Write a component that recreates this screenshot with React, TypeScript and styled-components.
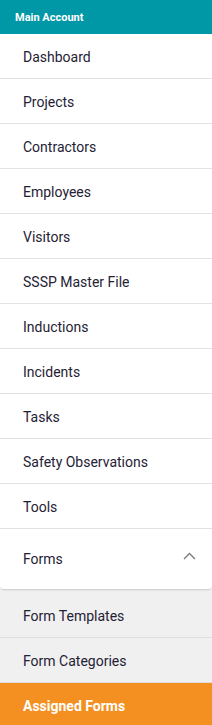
import React from 'react';
import styled, { createGlobalStyle } from 'styled-components';

const GlobalStyle = createGlobalStyle`
  html, body {
    margin: 0;
    padding: 0;
    background: #fff;
  }
  body {
    font-family: Roboto, "Liberation Sans", sans-serif;
  }
`;

const Sidebar = styled.nav`
  width: 212px;
  height: 725px;
  overflow: hidden;
  background: #fff;
  display: flex;
  flex-direction: column;
`;

const Header = styled.div`
  height: 34px;
  flex-shrink: 0;
  background: #0097a7;
  color: #fff;
  font-size: 11px;
  font-weight: 700;
  display: flex;
  align-items: center;
  padding: 0 15px;
`;

const Item = styled.div`
  height: 44px;
  flex-shrink: 0;
  box-sizing: border-box;
  border-bottom: 1px solid #e3e3e3;
  height: 45px;
  display: flex;
  align-items: center;
  padding: 1px 0 0 23px;
  font-size: 14px;
  color: #1f2235;
`;

const Group = styled.div`
  height: 60px;
  flex-shrink: 0;
  display: flex;
  align-items: center;
  justify-content: space-between;
  padding: 0 16px 0 23px;
  font-size: 14px;
  color: #1f2235;
  background: #fff;
  border-radius: 0 0 4px 4px;
  box-shadow: 0 1px 2px rgba(0, 0, 0, 0.16);
  position: relative;
  z-index: 1;
`;

const Chevron = styled.svg`
  margin-bottom: 7px;
`;

const SubMenu = styled.div`
  background: #f0f0f0;
  padding-top: 4px;
  display: flex;
  flex-direction: column;
`;

const SubItem = styled.div<{ $active?: boolean }>`
  height: 45px;
  flex-shrink: 0;
  display: flex;
  align-items: center;
  padding: 1px 0 0 23px;
  font-size: 14px;
  box-sizing: border-box;
  color: ${(p) => (p.$active ? '#fff' : '#1f2235')};
  font-weight: ${(p) => (p.$active ? 700 : 400)};
  background: ${(p) => (p.$active ? '#f39021' : 'transparent')};
  border-bottom: 1px solid ${(p) => (p.$active ? '#f39021' : '#dedede')};
`;

const items = [
  'Dashboard',
  'Projects',
  'Contractors',
  'Employees',
  'Visitors',
  'SSSP Master File',
  'Inductions',
  'Incidents',
  'Tasks',
  'Safety Observations',
  'Tools',
];

const subItems = ['Form Templates', 'Form Categories', 'Assigned Forms'];

export default function App() {
  return (
    <>
      <GlobalStyle />
      <Sidebar>
        <Header>Main Account</Header>
        {items.map((label) => (
          <Item key={label}>{label}</Item>
        ))}
        <Group>
          Forms
          <Chevron width="13" height="8" viewBox="0 0 13 8">
            <path d="M1 7 L6.5 1.5 L12 7" fill="none" stroke="#7a7a7a" strokeWidth="1.4" />
          </Chevron>
        </Group>
        <SubMenu>
          {subItems.map((label) => (
            <SubItem key={label} $active={label === 'Assigned Forms'}>
              {label}
            </SubItem>
          ))}
        </SubMenu>
      </Sidebar>
    </>
  );
}
